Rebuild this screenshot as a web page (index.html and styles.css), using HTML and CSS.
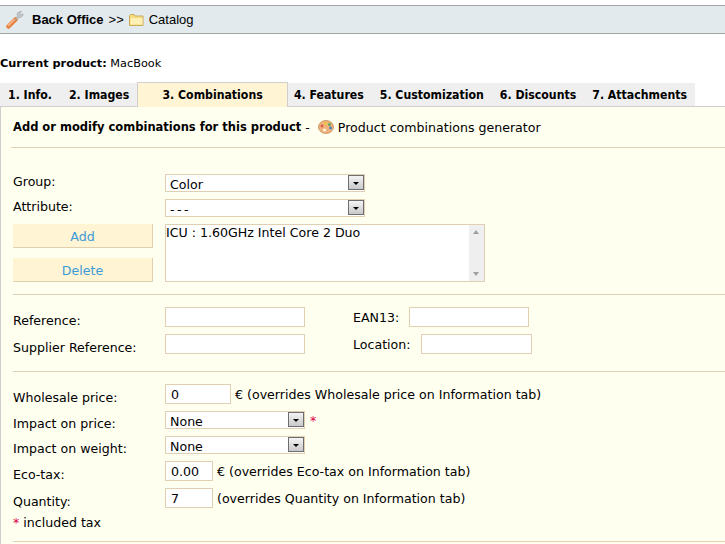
FILE: index.html
```html
<!DOCTYPE html>
<html lang="en">
<head>
  <meta charset="UTF-8">
  <title>Back Office - Catalog</title>
  <link rel="stylesheet" href="styles.css">
</head>
<body>
  <div class="path-bar">
    <svg class="icon-wrench" width="18" height="20" viewBox="0 0 18 20">
      <path d="M2.500 16.500 L9.500 9.500" stroke="#e8803f" stroke-width="4.500" stroke-linecap="round"/>
      <path d="M2.500 15.500 L8.500 9.500" stroke="#f9b98f" stroke-width="1.500" stroke-linecap="round"/>
      <path d="M9 10 L11.500 6 L11 3.500 L14 1.500 L15.500 1.500 L13.800 3.800 L14.600 5 L17 3.800 L16.700 5.800 L14.500 7.500 L12 8 Z" fill="#c4c7c9" stroke="#9a9fa3" stroke-width=".6"/>
    </svg>
    <b class="path-root">Back Office</b>
    <span class="path-sep">&gt;&gt;</span>
    <svg class="icon-folder" width="15" height="14" viewBox="0 0 15 14">
      <path d="M.5 12.500 V2.500 L1.500 1.500 H5 L6 3 H14 V12.500 Z" fill="#f7dc7e" stroke="#c9a95a"/>
      <path d="M1.500 5 H13.500 V11.500 H1.500 Z" fill="#fdf0b4"/>
    </svg>
    <span class="path-name">Catalog</span>
  </div>

  <p class="current"><b>Current product:</b> <span class="current-name">MacBook</span></p>

  <ul class="tabs">
    <li>1. Info.</li>
    <li>2. Images</li>
    <li class="active">3. Combinations</li>
    <li>4. Features</li>
    <li>5. Customization</li>
    <li>6. Discounts</li>
    <li>7. Attachments</li>
  </ul>

  <div class="panel">
    <div class="panel-title">
      <b>Add or modify combinations for this product</b> -
      <svg class="icon-palette" width="16" height="16" viewBox="0 0 16 16">
        <ellipse cx="8" cy="8" rx="7.500" ry="6.500" fill="#eeb27a" stroke="#c08a58" stroke-width=".8"/>
        <circle cx="4" cy="7" r="1.400" fill="#e2584a"/>
        <circle cx="7.500" cy="4.500" r="1.400" fill="#efc940"/>
        <circle cx="11.500" cy="5.500" r="1.400" fill="#5aa858"/>
        <circle cx="12.500" cy="9" r="1.400" fill="#4a80c8"/>
        <circle cx="6.500" cy="11" r="1.600" fill="#fff3e0"/>
      </svg>
      <span>Product combinations generator</span>
    </div>
    <hr class="rule first-rule">

    <div class="attr-section">
      <div class="attr-labels">
        <div class="lbl lbl-group">Group:</div>
        <div class="lbl lbl-attr">Attribute:</div>
        <div class="btn btn-add">Add</div>
        <div class="btn">Delete</div>
      </div>
      <div class="attr-fields">
        <div class="select select-wide">Color<i class="arrow"></i></div>
        <div class="select select-wide"><span class="dashes">---</span><i class="arrow"></i></div>
        <div class="listbox">
          <span>ICU : 1.60GHz Intel Core 2 Duo</span>
          <div class="scrollbar"><i class="up"></i><i class="down"></i></div>
        </div>
      </div>
    </div>
    <hr class="rule">

    <div class="ref-section">
      <div class="ref-row">
        <div class="lbl ref-label">Reference:</div>
        <div class="input input-ref"></div>
        <div class="lbl ean-label">EAN13:</div>
        <div class="input input-ean"></div>
      </div>
      <div class="ref-row">
        <div class="lbl ref-label">Supplier Reference:</div>
        <div class="input input-ref"></div>
        <div class="lbl loc-label">Location:</div>
        <div class="input input-loc"></div>
      </div>
    </div>
    <hr class="rule">

    <div class="price-section">
      <div class="price-row row-wholesale">
        <div class="lbl price-label">Wholesale price:</div>
        <div class="input input-price">0</div>
        <span class="note">€ (overrides Wholesale price on Information tab)</span>
      </div>
      <div class="price-row row-impact">
        <div class="lbl price-label">Impact on price:</div>
        <div class="select select-mid">None<i class="arrow"></i></div>
        <span class="star">*</span>
      </div>
      <div class="price-row row-weight">
        <div class="lbl price-label">Impact on weight:</div>
        <div class="select select-mid">None<i class="arrow"></i></div>
      </div>
      <div class="price-row row-eco">
        <div class="lbl price-label">Eco-tax:</div>
        <div class="input input-small">0.00</div>
        <span class="note">€ (overrides Eco-tax on Information tab)</span>
      </div>
      <div class="price-row row-qty">
        <div class="lbl price-label">Quantity:</div>
        <div class="input input-small">7</div>
        <span class="note">(overrides Quantity on Information tab)</span>
      </div>
      <div class="tax-note"><span class="star">*</span> included tax</div>
    </div>
    <hr class="rule">
  </div>
</body>
</html>
```

FILE: styles.css
```css
html, body {
  height: 544px;
  overflow: hidden;
}
body {
  margin: 0;
  padding-top: 5px;
  font-family: "DejaVu Sans", Verdana, sans-serif;
  font-size: 12.6px;
  color: #000;
  background: #fff;
}
.path-bar {
  display: flex;
  align-items: center;
  height: 27px;
  padding-left: 6px;
  background: #e3eaee;
  border-top: 1px solid #a3a3a3;
  border-bottom: 1px solid #a3a3a3;
  font-family: "Liberation Sans", Arial, sans-serif;
  font-size: 13px;
}
.icon-wrench {
  margin-right: 8px;
}
.path-sep {
  margin: 0 5px;
}
.icon-folder {
  margin-right: 5px;
}
.current {
  margin: 0;
  padding-top: 22px;
  height: 26px;
  line-height: 15px;
  font-size: 11.3px;
}
.tabs {
  display: flex;
  margin: 0;
  padding: 0;
  list-style: none;
  height: 23px;
  width: 695px;
  background: #efefef;
  border-top: 1px solid #fff;
  font-family: "DejaVu Sans Condensed", "DejaVu Sans", sans-serif;
  font-size: 12.2px;
  font-weight: bold;
}
.tabs li {
  padding: 0 8px;
  line-height: 25px;
  white-space: nowrap;
}
.tabs li:first-child {
  padding-right: 9px;
}
.tabs .active {
  position: relative;
  width: 152px;
  padding: 0;
  height: 25px;
  margin-top: -1px;
  line-height: 25px;
  text-align: center;
  background: #fff4d3;
  border: 1px solid #cfcfcf;
  border-bottom: 0;
  box-sizing: border-box;
}
.tabs .active + li {
  padding-left: 6px;
}
.panel {
  height: 438px;
  padding-left: 12px;
  background: #fffff0;
  border-top: 1px solid #cfcfcf;
  border-left: 1px solid #cfcfcf;
  box-sizing: border-box;
}
.panel-title {
  display: flex;
  align-items: center;
  gap: 4px;
  height: 40px;
}
.panel-title b {
  font-size: 11.5px;
}
.icon-palette {
  margin-left: 4px;
}
.rule {
  height: 1px;
  margin: 0;
  border: 0;
  background: #e0d0b1;
}
.first-rule {
  margin-left: -2px;
}
.lbl {
  line-height: 15px;
}
.attr-section {
  display: flex;
  padding-top: 26px;
  height: 120px;
}
.attr-labels {
  width: 140px;
  margin-right: 12px;
}
.lbl-group,
.lbl-attr {
  height: 25px;
}
.btn {
  height: 23px;
  line-height: 25px;
  text-align: center;
  color: #3d9ad8;
  background: #fff4d3;
  border-right: 1px solid #e0d0b1;
  border-bottom: 1px solid #e0d0b1;
}
.btn-add {
  margin-bottom: 10px;
}
.select {
  position: relative;
  height: 16px;
  line-height: 20px;
  padding-left: 4px;
  background: #fff;
  border: 1px solid #e0d0b1;
  box-sizing: content-box;
}
.select-wide {
  width: 194px;
  margin-bottom: 7px;
}
.select-mid {
  width: 134px;
}
.dashes {
  letter-spacing: 2.5px;
}
.arrow {
  position: absolute;
  right: 0;
  top: 0;
  width: 16px;
  height: 15px;
  background: linear-gradient(#f4f4f4, #c9c9c9);
  border: 1px solid #6e6e6e;
  box-sizing: border-box;
}
.arrow::after {
  content: "";
  position: absolute;
  left: 4px;
  top: 6px;
  border: 3px solid transparent;
  border-top: 3px solid #000;
  border-bottom: 0;
}
.listbox {
  display: flex;
  justify-content: space-between;
  width: 318px;
  height: 56px;
  line-height: 15px;
  background: #fff;
  border: 1px solid #e0d0b1;
}
.scrollbar {
  position: relative;
  width: 15px;
  background: #efefef;
}
.scrollbar i {
  position: absolute;
  left: 4px;
  border: 3px solid transparent;
}
.scrollbar .up {
  top: 5px;
  border-top: 0;
  border-bottom: 4px solid #a0a0a0;
}
.scrollbar .down {
  bottom: 5px;
  border-bottom: 0;
  border-top: 4px solid #a0a0a0;
}
.ref-section {
  padding-top: 12px;
  height: 64px;
}
.ref-row {
  display: flex;
  align-items: center;
  height: 20px;
  margin-bottom: 7px;
}
.ref-label {
  width: 152px;
  padding-top: 6px;
}
.input {
  height: 20px;
  line-height: 20px;
  padding-left: 5px;
  background: #fff;
  border: 1px solid #e0d0b1;
  box-sizing: border-box;
}
.input-ref {
  width: 140px;
}
.input-ean {
  width: 120px;
}
.input-loc {
  width: 111px;
}
.ean-label {
  width: 56px;
  margin-left: 48px;
  padding-top: 1px;
}
.loc-label {
  width: 68px;
  margin-left: 48px;
  padding-top: 1px;
}
.price-section {
  padding-top: 12px;
  height: 157px;
}
.price-row {
  display: flex;
  align-items: center;
}
.price-label {
  width: 152px;
  padding-top: 6px;
}
.input-price {
  width: 66px;
  margin-right: 4px;
}
.input-small {
  width: 48px;
  margin-right: 4px;
}
.note {
  line-height: 17px;
}
.star {
  color: #e00045;
}
.row-impact .star {
  margin-left: 5px;
}
.row-wholesale, .row-eco, .row-qty {
  height: 20px;
}
.row-impact, .row-weight {
  height: 18px;
}
.row-impact, .row-weight, .row-eco, .row-qty {
  margin-top: 7px;
}
.tax-note {
  margin-top: 7px;
  line-height: 15px;
}
```
